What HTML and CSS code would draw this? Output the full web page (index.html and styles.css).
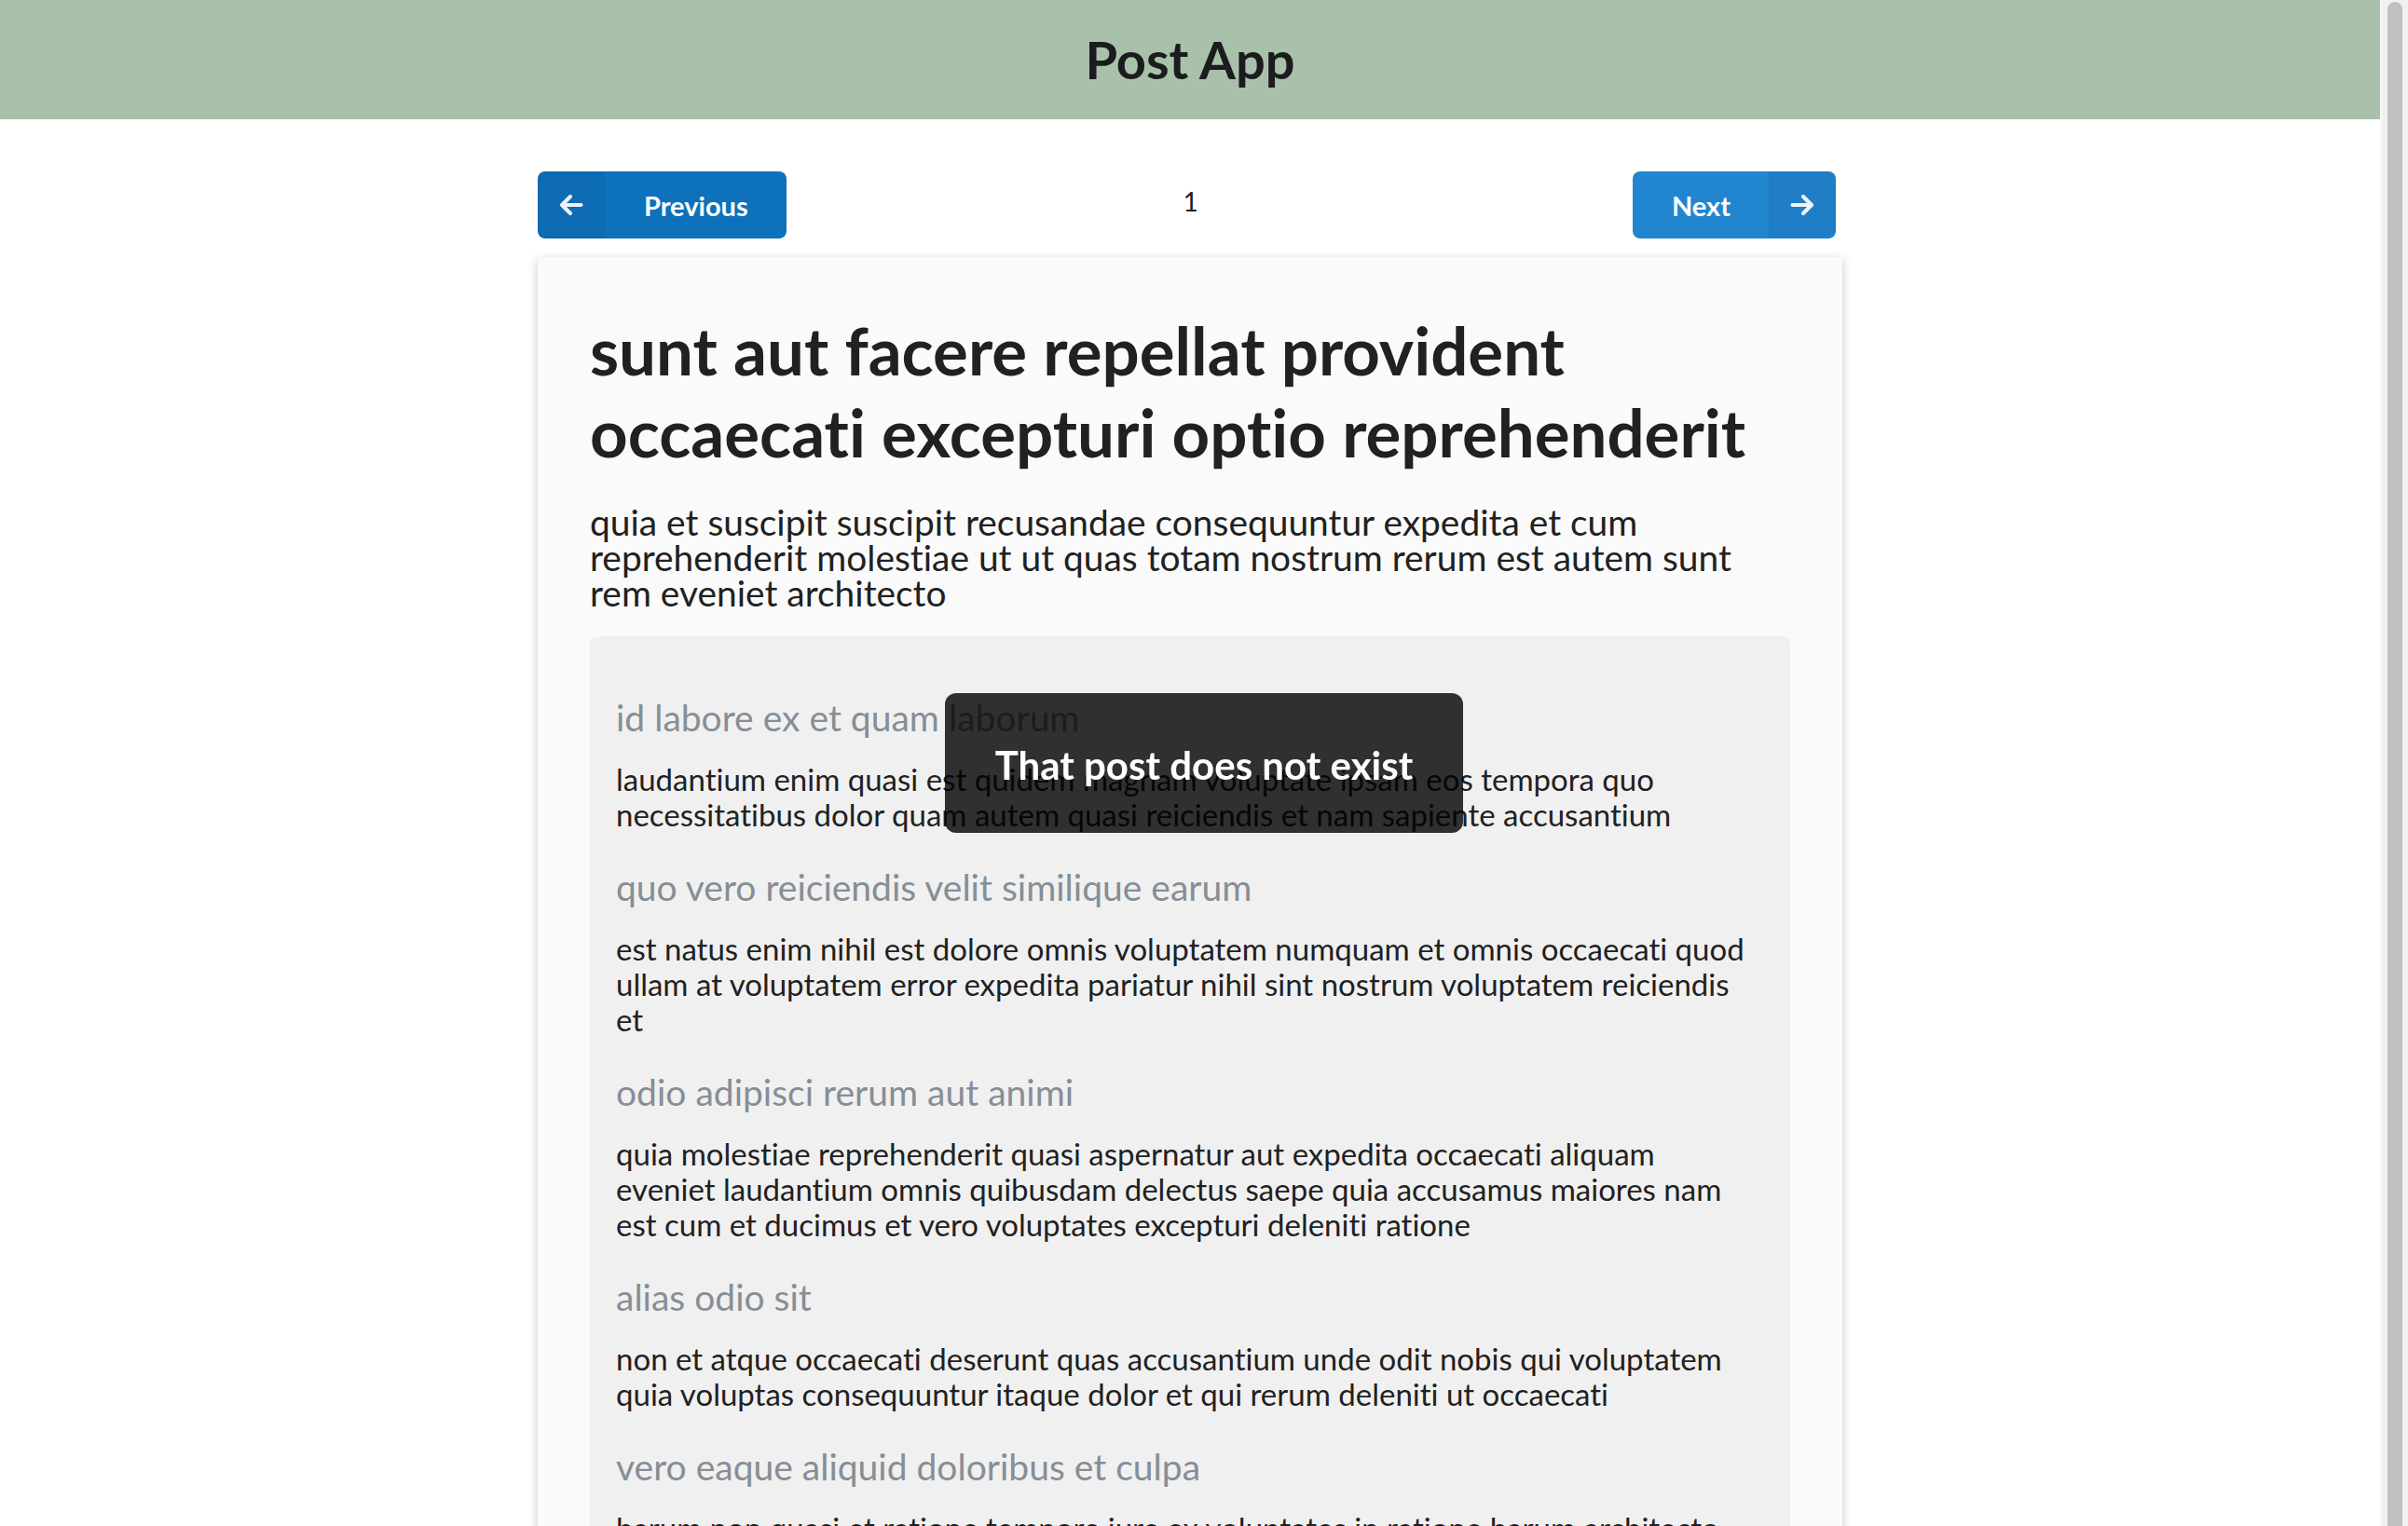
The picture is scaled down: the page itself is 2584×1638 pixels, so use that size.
FILE: index.html
```html
<!DOCTYPE html>
<html lang="en">
<head>
<meta charset="utf-8">
<title>Post App</title>
<link rel="stylesheet" href="styles.css">
</head>
<body>
<div class="screen">
  <div class="page">
    <header class="app-header">
      <h1 class="app-title">Post App</h1>
    </header>
    <main class="container">
      <nav class="pager">
        <button class="btn btn-prev" type="button">
          <span class="btn-icon">
            <svg width="26" height="24" viewBox="0 0 26 24"><path d="M23.5 12H3M12 3L3 12l9 9" fill="none" stroke="currentColor" stroke-width="4.2" stroke-linecap="round" stroke-linejoin="round"/></svg>
          </span>
          <span class="btn-label">Previous</span>
        </button>
        <span class="page-num">1</span>
        <button class="btn btn-next" type="button">
          <span class="btn-label">Next</span>
          <span class="btn-icon">
            <svg width="26" height="24" viewBox="0 0 26 24"><path d="M2.5 12H23M14 3l9 9-9 9" fill="none" stroke="currentColor" stroke-width="4.2" stroke-linecap="round" stroke-linejoin="round"/></svg>
          </span>
        </button>
      </nav>
      <article class="post">
        <h2 class="post-title">sunt aut facere repellat provident occaecati excepturi optio reprehenderit</h2>
        <p class="post-body">quia et suscipit suscipit recusandae consequuntur expedita et cum reprehenderit molestiae ut ut quas totam nostrum rerum est autem sunt rem eveniet architecto</p>
        <section class="comments">
          <div class="comment">
            <h3 class="comment-name">id labore ex et quam laborum</h3>
            <p class="comment-body">laudantium enim quasi est quidem magnam voluptate ipsam eos tempora quo necessitatibus dolor quam autem quasi reiciendis et nam sapiente accusantium</p>
          </div>
          <div class="comment">
            <h3 class="comment-name">quo vero reiciendis velit similique earum</h3>
            <p class="comment-body">est natus enim nihil est dolore omnis voluptatem numquam et omnis occaecati quod ullam at voluptatem error expedita pariatur nihil sint nostrum voluptatem reiciendis et</p>
          </div>
          <div class="comment">
            <h3 class="comment-name">odio adipisci rerum aut animi</h3>
            <p class="comment-body">quia molestiae reprehenderit quasi aspernatur aut expedita occaecati aliquam eveniet laudantium omnis quibusdam delectus saepe quia accusamus maiores nam est cum et ducimus et vero voluptates excepturi deleniti ratione</p>
          </div>
          <div class="comment">
            <h3 class="comment-name">alias odio sit</h3>
            <p class="comment-body">non et atque occaecati deserunt quas accusantium unde odit nobis qui voluptatem quia voluptas consequuntur itaque dolor et qui rerum deleniti ut occaecati</p>
          </div>
          <div class="comment">
            <h3 class="comment-name">vero eaque aliquid doloribus et culpa</h3>
            <p class="comment-body">harum non quasi et ratione tempore iure ex voluptates in ratione harum architecto fugit inventore cupiditate voluptates magni quo et</p>
          </div>
        </section>
      </article>
    </main>
  </div>
  <div class="scrollbar"><div class="scrollbar-thumb"></div></div>
</div>
<div class="toast">That post does not exist</div>
</body>
</html>
```

FILE: styles.css
```css
html, body {
  margin: 0;
  padding: 0;
  height: 100%;
  overflow: hidden;
}
body {
  font-family: Lato, "Helvetica Neue", Arial, sans-serif;
  color: #212121;
  background: #ffffff;
  font-variant-ligatures: none;
  font-feature-settings: "liga" 0, "clig" 0;
}
.screen {
  display: flex;
  height: 100vh;
}
.page {
  flex: 1;
  min-width: 0;
  overflow: hidden;
}
.scrollbar {
  width: 30px;
  flex: none;
  background: #f1f1f1;
  border-left: 2px solid #f8f8f8;
  box-sizing: border-box;
  padding: 2px 6px 0 6px;
}
.scrollbar-thumb {
  height: 100%;
  background: #c1c1c1;
  border-radius: 8px 8px 0 0;
}
.app-header {
  height: 128px;
  background: #a9c1aa;
  display: flex;
  align-items: center;
  justify-content: center;
}
.app-title {
  margin: 0;
  font-size: 56px;
  line-height: 1;
  font-weight: 700;
  color: #1b1c1d;
}
.container {
  width: 1400px;
  margin: 0 auto;
  padding-top: 56px;
}
.pager {
  display: grid;
  grid-template-columns: 1fr auto 1fr;
  align-items: center;
  margin-right: 7px;
}
.page-num {
  font-size: 28px;
  line-height: 1;
  margin: -8px 0 0 8px;
}
.btn {
  display: flex;
  align-items: stretch;
  height: 72px;
  padding: 0;
  border: 0;
  border-radius: 8px;
  overflow: hidden;
  font-family: Lato, "Helvetica Neue", Arial, sans-serif;
  font-size: 29px;
  font-weight: 700;
  color: #ffffff;
  cursor: pointer;
  font-variant-ligatures: none;
}
.btn-prev {
  justify-self: start;
  background: #0d71bb;
}
.btn-next {
  justify-self: end;
  background: #2185d0;
}
.btn-icon {
  width: 72px;
  display: flex;
  align-items: center;
  justify-content: center;
  background: rgba(0, 0, 0, 0.05);
  color: rgba(255, 255, 255, 0.92);
}
.btn-label {
  display: flex;
  align-items: center;
}
.btn-prev .btn-label {
  padding: 0 41px 0 42px;
}
.btn-next .btn-label {
  padding: 0 41px 0 42px;
}
.post {
  margin-top: 20px;
  background: #fafafa;
  box-shadow: 0 3px 10px rgba(0, 0, 0, 0.22);
  padding: 56px 56px 56px 56px;
}
.post-title {
  margin: 0;
  font-size: 70.8px;
  line-height: 88px;
  font-weight: 700;
  color: #212121;
}
.post-body {
  margin: 33px 0 0 0;
  font-size: 38.9px;
  line-height: 38px;
  color: #212121;
}
.comments {
  margin-top: 28px;
  background: #f0f0f0;
  border-radius: 8px;
  padding: 64px 40px 40px 28px;
  display: flex;
  flex-direction: column;
  gap: 36px;
}
.comment-name {
  margin: 0 0 24px 0;
  font-size: 39px;
  line-height: 46px;
  font-weight: 400;
  color: #868e96;
}
.comment-body {
  margin: 0;
  font-size: 33px;
  line-height: 38px;
  color: #212121;
}
.toast {
  position: fixed;
  left: 50vw;
  top: 50vh;
  transform: translate(-50%, -50%);
  width: 556px;
  height: 150px;
  box-sizing: border-box;
  display: flex;
  align-items: center;
  justify-content: center;
  padding-top: 3px;
  background: rgba(0, 0, 0, 0.8);
  border-radius: 12px;
  color: #ffffff;
  font-size: 42px;
  font-weight: 700;
  white-space: nowrap;
}
```
